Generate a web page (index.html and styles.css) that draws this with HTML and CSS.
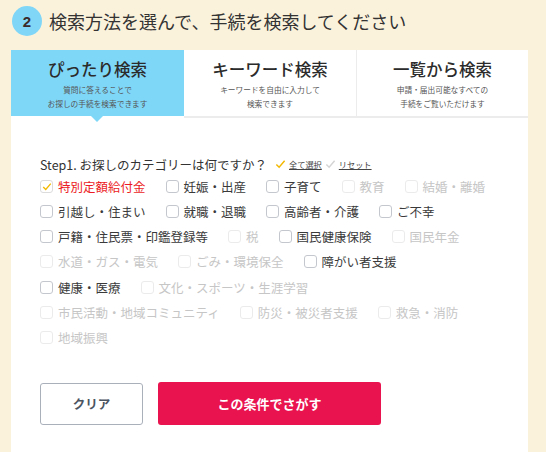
FILE: index.html
```html
<!DOCTYPE html>
<html lang="ja">
<head>
<meta charset="utf-8">
<title>手続検索</title>
<link rel="stylesheet" href="styles.css">
</head>
<body>
<div class="page">
  <div class="head">
    <span class="num">2</span>
    <h2 class="title">検索方法を選んで、手続を検索してください</h2>
  </div>
  <div class="panel">
    <div class="tabs">
      <div class="tab active">
        <div class="tab-title">ぴったり検索</div>
        <p class="tab-sub">質問に答えることで<br>お探しの手続を検索できます</p>
      </div>
      <div class="tab">
        <div class="tab-title">キーワード検索</div>
        <p class="tab-sub">キーワードを自由に入力して<br>検索できます</p>
      </div>
      <div class="tab tab-last">
        <div class="tab-title">一覧から検索</div>
        <p class="tab-sub">申請・届出可能なすべての<br>手続をご覧いただけます</p>
      </div>
    </div>
    <div class="body">
      <div class="step">
        <span class="step-q">Step1. お探しのカテゴリーは何ですか？</span>
        <a class="link link-all"><svg class="tick" viewBox="0 0 12 10"><polyline points="1.5,5.5 4.5,8.5 10.5,1.5"/></svg><span>全て選択</span></a>
        <a class="link link-reset"><svg class="tick" viewBox="0 0 12 10"><polyline points="1.5,5.5 4.5,8.5 10.5,1.5"/></svg><span>リセット</span></a>
      </div>
      <ul class="cats">
        <li class="cat checked"><span class="box"><svg viewBox="0 0 12 10"><polyline points="1.5,5.5 4.5,8.5 10.5,1.5"/></svg></span>特別定額給付金</li>
        <li class="cat"><span class="box"></span>妊娠・出産</li>
        <li class="cat"><span class="box"></span>子育て</li>
        <li class="cat off"><span class="box"></span>教育</li>
        <li class="cat off"><span class="box"></span>結婚・離婚</li>
        <li class="cat"><span class="box"></span>引越し・住まい</li>
        <li class="cat"><span class="box"></span>就職・退職</li>
        <li class="cat"><span class="box"></span>高齢者・介護</li>
        <li class="cat"><span class="box"></span>ご不幸</li>
        <li class="cat"><span class="box"></span>戸籍・住民票・印鑑登録等</li>
        <li class="cat off"><span class="box"></span>税</li>
        <li class="cat"><span class="box"></span>国民健康保険</li>
        <li class="cat off"><span class="box"></span>国民年金</li>
        <li class="cat off"><span class="box"></span>水道・ガス・電気</li>
        <li class="cat off"><span class="box"></span>ごみ・環境保全</li>
        <li class="cat"><span class="box"></span>障がい者支援</li>
        <li class="cat"><span class="box"></span>健康・医療</li>
        <li class="cat off"><span class="box"></span>文化・スポーツ・生涯学習</li>
        <li class="cat off"><span class="box"></span>市民活動・地域コミュニティ</li>
        <li class="cat off"><span class="box"></span>防災・被災者支援</li>
        <li class="cat off"><span class="box"></span>救急・消防</li>
        <li class="cat off"><span class="box"></span>地域振興</li>
      </ul>
      <div class="actions">
        <button class="btn btn-clear">クリア</button>
        <button class="btn btn-search">この条件でさがす</button>
      </div>
    </div>
  </div>
</div>
</body>
</html>
```

FILE: styles.css
```css
* { box-sizing: border-box; }
html, body {
  margin: 0;
  padding: 0;
  background: #fbf2dc;
  font-family: "Noto Sans CJK JP", "Noto Sans", sans-serif;
  color: #333;
}
.page {
  padding: 0 18px 0 11px;
  height: 452px;
  overflow: hidden;
}
.head {
  height: 50px;
  display: flex;
  align-items: center;
  gap: 7px;
  padding-bottom: 8px;
  padding-left: 1px;
}
.num {
  width: 30px;
  height: 30px;
  border-radius: 50%;
  background: #7fd6f7;
  color: #3a2a2a;
  font-weight: 700;
  font-size: 15px;
  display: flex;
  align-items: center;
  justify-content: center;
  font-family: "Liberation Sans", sans-serif;
}
.title {
  margin: 0;
  font-size: 18px;
  font-weight: 400;
  color: #333;
  letter-spacing: 0;
}
.panel {
  background: #fff;
  height: 402px;
}
.tabs {
  display: grid;
  grid-template-columns: 173px 172px 172px;
  align-items: start;
}
.tab {
  height: 68px;
  border-bottom: 2px solid #ececec;
  text-align: center;
  padding-top: 8px;
  position: relative;
}
.tab-last { border-left: 1px solid #ececec; }
.tab.active {
  background: #7fd7f8;
  height: 66px;
  border-bottom: none;
}
.tab.active::after {
  content: "";
  position: absolute;
  left: 80px;
  bottom: -6px;
  border-left: 6px solid transparent;
  border-right: 6px solid transparent;
  border-top: 6px solid #7fd7f8;
}
.tab-title {
  font-size: 16.5px;
  line-height: 22px;
  font-weight: 500;
  color: #2b2b2b;
}
.tab-sub {
  margin: 3px 0 0;
  font-size: 7.7px;
  line-height: 14px;
  color: #555;
}
.body {
  padding: 37px 38px 0 29px;
}
.step {
  display: flex;
  align-items: center;
  height: 18px;
  font-size: 12.5px;
}
.step-q { color: #333; margin-right: 5px; }
.link {
  display: inline-flex;
  align-items: center;
  font-size: 8.2px;
  color: #444;
  margin-left: 3px;
}
.link span { text-decoration: underline; margin-left: 3px; }
.tick {
  width: 11px;
  height: 10px;
  fill: none;
  stroke-width: 1.6;
}
.link-all .tick { stroke: #f3b800; }
.link-reset .tick { stroke: #d4d4d4; }
.cats {
  list-style: none;
  margin: 4px 0 0;
  padding: 0;
  display: flex;
  flex-wrap: wrap;
  column-gap: 20px;
  row-gap: 7.3px;
}
.cat {
  display: flex;
  align-items: center;
  height: 18px;
  font-size: 12.5px;
  color: #3a3a3a;
  white-space: nowrap;
}
.box {
  width: 13px;
  height: 13px;
  border: 1px solid #c4c8ce;
  border-radius: 3px;
  margin-right: 5px;
  display: flex;
  align-items: center;
  justify-content: center;
  background: #fff;
}
.box svg {
  width: 10px;
  height: 9px;
  fill: none;
  stroke: #f3b800;
  stroke-width: 1.6;
}
.cat.checked { color: #ec1c24; }
.cat.checked .box { border-color: #dcdcdc; }
.cat.off { color: #c6c6c6; }
.cat.off .box { border-color: #ebebeb; }
.actions {
  display: flex;
  gap: 15px;
  margin-top: 36px;
}
.btn {
  font-family: "Noto Sans CJK JP", sans-serif;
  font-weight: 700;
  cursor: pointer;
  border-radius: 3px;
}
.btn-clear {
  width: 103px;
  height: 42px;
  background: #fff;
  border: 1px solid #a9b0ba;
  color: #4b5461;
  font-size: 12.5px;
}
.btn-search {
  width: 223px;
  height: 43px;
  margin-top: -1px;
  background: #e9134f;
  border: none;
  color: #fff;
  font-size: 13px;
}
```
